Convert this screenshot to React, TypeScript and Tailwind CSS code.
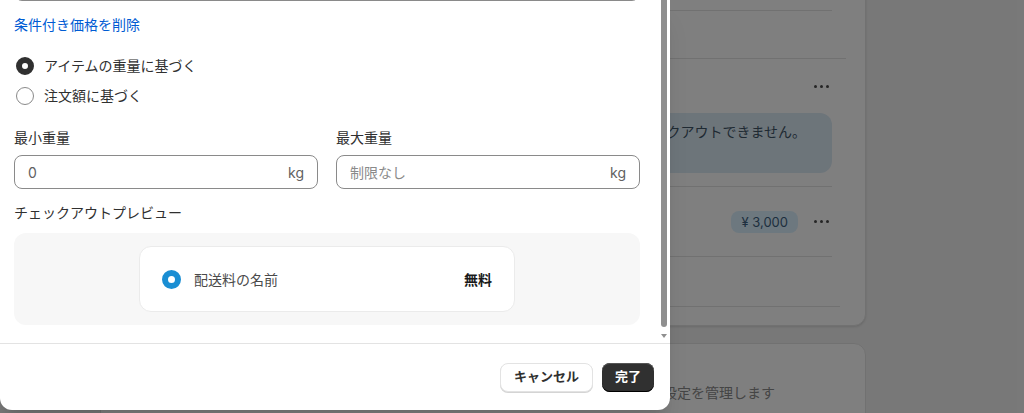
import type { ReactNode } from 'react'

function Dots() {
  return (
    <div className="flex items-center gap-[3px] mr-[3px]">
      <span className="w-[3px] h-[3px] rounded-full bg-[#4a4a4a]" />
      <span className="w-[3px] h-[3px] rounded-full bg-[#4a4a4a]" />
      <span className="w-[3px] h-[3px] rounded-full bg-[#4a4a4a]" />
    </div>
  )
}

function BackgroundPage() {
  return (
    <div className="flex flex-col gap-[17px] pl-[100px] w-[866px]">
      <div className="-mt-[30px] bg-white rounded-b-xl border border-[#e3e3e3] shadow-sm pl-4 pr-[33px]">
        <div className="h-[40px] border-b border-[#e3e3e3]" />
        <div className="h-[48px] border-b border-[#e3e3e3] -mr-[14px]" />
        <div className="h-[54px] flex items-center justify-end">
          <Dots />
        </div>
        <div className="pb-[13px] border-b border-[#e3e3e3]">
          <div className="h-[60px] rounded-xl bg-[#dbeaf5] flex justify-end pt-[9px] pr-[26px]">
            <p className="whitespace-nowrap h-[20px] leading-[20px] text-[14px] text-[#3f5567]">
              この配送料ではお客様はチェックアウトできません。
            </p>
          </div>
        </div>
        <div className="h-[70px] flex items-center justify-end gap-[16px] border-b border-[#e3e3e3]">
          <span className="h-[22px] px-[10px] rounded-lg bg-[#dbf1ff] text-[13px] leading-[22px] text-[#3d5f80]">
            ¥ 3,000
          </span>
          <Dots />
        </div>
        <div className="h-[50px] border-b border-[#e3e3e3] -mr-[8px]" />
        <div className="h-[18px]" />
      </div>
      <div className="h-[110px] bg-white rounded-xl border border-[#e3e3e3] pl-4 pr-[90px] pt-[17px]">
        <p className="h-[20px] text-[14px] font-semibold text-[#303030]">一般</p>
        <div className="mt-[2px] flex justify-end">
          <p className="whitespace-nowrap text-[14px] leading-[20px] text-[#8a8a8a]">
            チェックアウトの設定を管理します
          </p>
        </div>
      </div>
    </div>
  )
}

function Radio({ checked, label }: { checked?: boolean; label: string }) {
  return (
    <label className="flex items-center h-[20px] gap-[10px] pl-[2px]">
      {checked ? (
        <span className="w-[18px] h-[18px] rounded-full border-[6px] border-[#303030] bg-white" />
      ) : (
        <span className="w-[18px] h-[18px] rounded-full border border-[#8a8a8a] bg-white" />
      )}
      <span className="leading-[20px]">{label}</span>
    </label>
  )
}

function Field({ label, value, placeholder }: { label: string; value?: string; placeholder?: string }) {
  return (
    <div className="flex-1">
      <p className="h-[20px] leading-[20px]">{label}</p>
      <div className="mt-[7px] h-[34px] rounded-lg border border-[#8a8a8a] flex items-center justify-between pl-[13px] pr-[13px]">
        <span className={value ? 'text-[#616161]' : 'text-[#8a8a8a]'}>{value ?? placeholder}</span>
        <span className="text-[#616161]">kg</span>
      </div>
    </div>
  )
}

function Button({ dark, children }: { dark?: boolean; children: ReactNode }) {
  return dark ? (
    <button className="h-[29px] px-[13px] rounded-lg bg-[#303030] text-white text-[13px] font-bold shadow-[inset_0_-1px_0_#000,inset_0_1px_0_#555]">
      {children}
    </button>
  ) : (
    <button className="h-[29px] px-[13px] rounded-lg bg-white border border-[#e3e3e3] text-[#303030] text-[13px] font-bold shadow-[0_1px_0_#d4d4d4]">
      {children}
    </button>
  )
}

function Modal() {
  return (
    <div className="absolute left-0 top-0 w-[670px] h-[410px] bg-white rounded-b-xl shadow-xl flex flex-col overflow-hidden">
      <div className="flex h-[343px] overflow-hidden">
        <div className="flex-1 pl-[14px] pr-[20px] text-[14px] text-[#303030]">
          <div className="-mt-[33px] h-[34px] rounded-lg border border-[#8a8a8a]" />
          <button className="mt-[14px] block h-[20px] leading-[20px] text-[#005bd3]">条件付き価格を削除</button>
          <div className="mt-[21px] flex flex-col gap-[10px]">
            <Radio checked label="アイテムの重量に基づく" />
            <Radio label="注文額に基づく" />
          </div>
          <div className="mt-[22px] flex gap-[18px]">
            <Field label="最小重量" value="0" />
            <Field label="最大重量" placeholder="制限なし" />
          </div>
          <p className="mt-[14px] h-[20px] leading-[20px]">チェックアウトプレビュー</p>
          <div className="mt-[10px] h-[92px] rounded-xl bg-[#f7f7f7] flex items-center justify-center">
            <div className="w-[376px] h-[66px] rounded-xl bg-white border border-[#ebebeb] flex items-center justify-between pl-[22px] pr-[22px]">
              <div className="flex items-center gap-[13px]">
                <span className="w-[19px] h-[19px] rounded-full border-[6px] border-[#1a8ed3] bg-white" />
                <span className="text-[#4a4a4a]">配送料の名前</span>
              </div>
              <span className="font-bold text-[#1a1a1a]">無料</span>
            </div>
          </div>
        </div>
        <div className="w-[8px] mr-[2px] flex flex-col items-center">
          <div className="w-[6px] h-[327px] rounded-b-full bg-[#8f8f8f]" />
          <div className="mt-[7px] w-0 h-0 border-x-[3.5px] border-x-transparent border-t-[4px] border-t-[#8f8f8f]" />
        </div>
      </div>
      <div className="flex-1 border-t border-[#e3e3e3] flex items-center justify-end gap-[9px] pr-[16px]">
        <Button>キャンセル</Button>
        <Button dark>完了</Button>
      </div>
    </div>
  )
}

export default function App() {
  return (
    <div className="relative w-[1024px] h-[413px] overflow-hidden bg-[#f1f1f1] font-['Inter','Noto_Sans_CJK_JP',sans-serif]">
      <BackgroundPage />
      <div className="absolute inset-0 bg-black/50" />
      <Modal />
    </div>
  )
}
